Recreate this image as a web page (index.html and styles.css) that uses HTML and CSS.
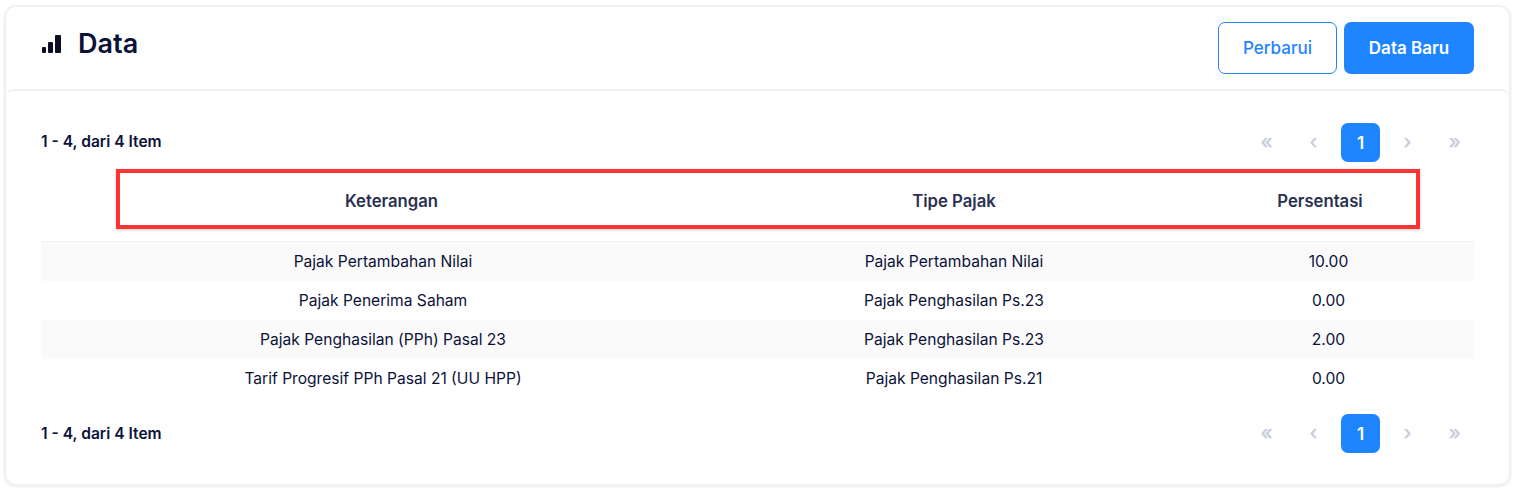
FILE: index.html
```html
<!DOCTYPE html>
<html lang="en">
  <head>
    <meta charset="UTF-8" />
    <title>Data</title>
    <link rel="stylesheet" href="styles.css">
  </head>
  <body>
    <div class="card">
      <div class="card-header">
        <div class="card-title">
          <svg class="title-icon" width="19" height="18" viewBox="0 0 19 18">
            <rect x="0" y="12" width="4" height="6" rx="1" />
            <rect x="6" y="7" width="5" height="11" rx="1" />
            <rect x="13" y="0" width="6" height="18" rx="1" />
          </svg>
          <h1>Data</h1>
        </div>
        <div class="actions">
          <button class="btn btn-outline">Perbarui</button>
          <button class="btn btn-primary">Data Baru</button>
        </div>
      </div>
      <div class="card-body">
        <div class="pager-row">
          <span class="total">1 - 4, dari 4 Item</span>
          <div class="pager">
            <span class="page">«</span>
            <span class="page">‹</span>
            <span class="page active">1</span>
            <span class="page">›</span>
            <span class="page">»</span>
          </div>
        </div>
        <div class="table-head">
          <div class="head-cell">Keterangan</div>
          <div class="head-cell">Tipe Pajak</div>
          <div class="head-cell">Persentasi</div>
        </div>
        <div class="table-rows">
          <div class="row">
            <div>Pajak Pertambahan Nilai</div>
            <div>Pajak Pertambahan Nilai</div>
            <div>10.00</div>
          </div>
          <div class="row">
            <div>Pajak Penerima Saham</div>
            <div>Pajak Penghasilan Ps.23</div>
            <div>0.00</div>
          </div>
          <div class="row">
            <div>Pajak Penghasilan (PPh) Pasal 23</div>
            <div>Pajak Penghasilan Ps.23</div>
            <div>2.00</div>
          </div>
          <div class="row">
            <div>Tarif Progresif PPh Pasal 21 (UU HPP)</div>
            <div>Pajak Penghasilan Ps.21</div>
            <div>0.00</div>
          </div>
        </div>
        <div class="pager-row pager-bottom">
          <span class="total">1 - 4, dari 4 Item</span>
          <div class="pager">
            <span class="page">«</span>
            <span class="page">‹</span>
            <span class="page active">1</span>
            <span class="page">›</span>
            <span class="page">»</span>
          </div>
        </div>
      </div>
    </div>
  </body>
</html>
```

FILE: styles.css
```css
* {
  box-sizing: border-box;
}

body {
  margin: 0;
  padding: 5px 7px 4px 4px;
  background-color: #fff;
  font-family: Inter, "Liberation Sans", sans-serif;
  color: #0b1238;
}

.card {
  height: 481px;
  border: 2px solid #f1f1f3;
  border-radius: 12px;
  box-shadow: 0 1px 3px rgba(0, 0, 0, 0.08);
}

.card-header {
  display: flex;
  justify-content: space-between;
  height: 82px;
  padding: 15px 35px 0;
}

.card-title {
  display: flex;
  align-items: flex-start;
  padding: 5px 0 0 1px;
}

.title-icon {
  margin: 8px 17px 0 0;
  fill: #0b0f24;
}

h1 {
  margin: 0;
  font-size: 27px;
  line-height: 34px;
  font-weight: 600;
}

.actions {
  display: flex;
  gap: 7px;
}

.btn {
  height: 52px;
  border-radius: 7px;
  font-family: inherit;
  font-size: 17px;
  font-weight: 500;
}

.btn-outline {
  width: 119px;
  background-color: #fff;
  border: 1px solid #1e85ff;
  color: #1e85ff;
}

.btn-primary {
  width: 130px;
  background-color: #1e85ff;
  border: none;
  color: #fff;
  font-weight: 600;
}

.card-body {
  padding: 32px 35px 0;
  border-top: 2px solid #f1f1f3;
  border-radius: 8px 8px 0 0;
}

.pager-row {
  display: flex;
  justify-content: space-between;
  align-items: center;
}

.pager-bottom {
  margin-top: 16px;
}

.total {
  margin-top: -2px;
  font-size: 15.6px;
  font-weight: 600;
}

.pager-bottom .total {
  margin-top: 0;
}

.pager {
  display: flex;
  gap: 8px;
}

.page {
  display: flex;
  align-items: center;
  justify-content: center;
  width: 39px;
  height: 39px;
  padding-bottom: 2px;
  border-radius: 7px;
  color: #c9cde0;
  font-size: 20px;
  font-weight: 600;
}

.page.active {
  padding-bottom: 0;
  background-color: #1e85ff;
  color: #fff;
  font-size: 17px;
  font-weight: 600;
}

.table-head {
  display: grid;
  grid-template-columns: 543px 582px 150px;
  align-items: center;
  height: 60px;
  padding-top: 4px;
  margin: 7px 54px 12px 75px;
  border: 4px solid #ff3333;
  box-shadow: 0 1px 3px rgba(0, 0, 0, 0.2);
  font-size: 16.7px;
  font-weight: 600;
  color: #2a3050;
  text-align: center;
}

.table-rows {
  border-top: 1px solid #f1f1f3;
}

.row {
  display: grid;
  grid-template-columns: 684px 458px 291px;
  align-items: center;
  height: 39px;
  font-size: 15.6px;
  text-align: center;
}

.row:nth-child(odd) {
  background-color: #fafafa;
}
```
